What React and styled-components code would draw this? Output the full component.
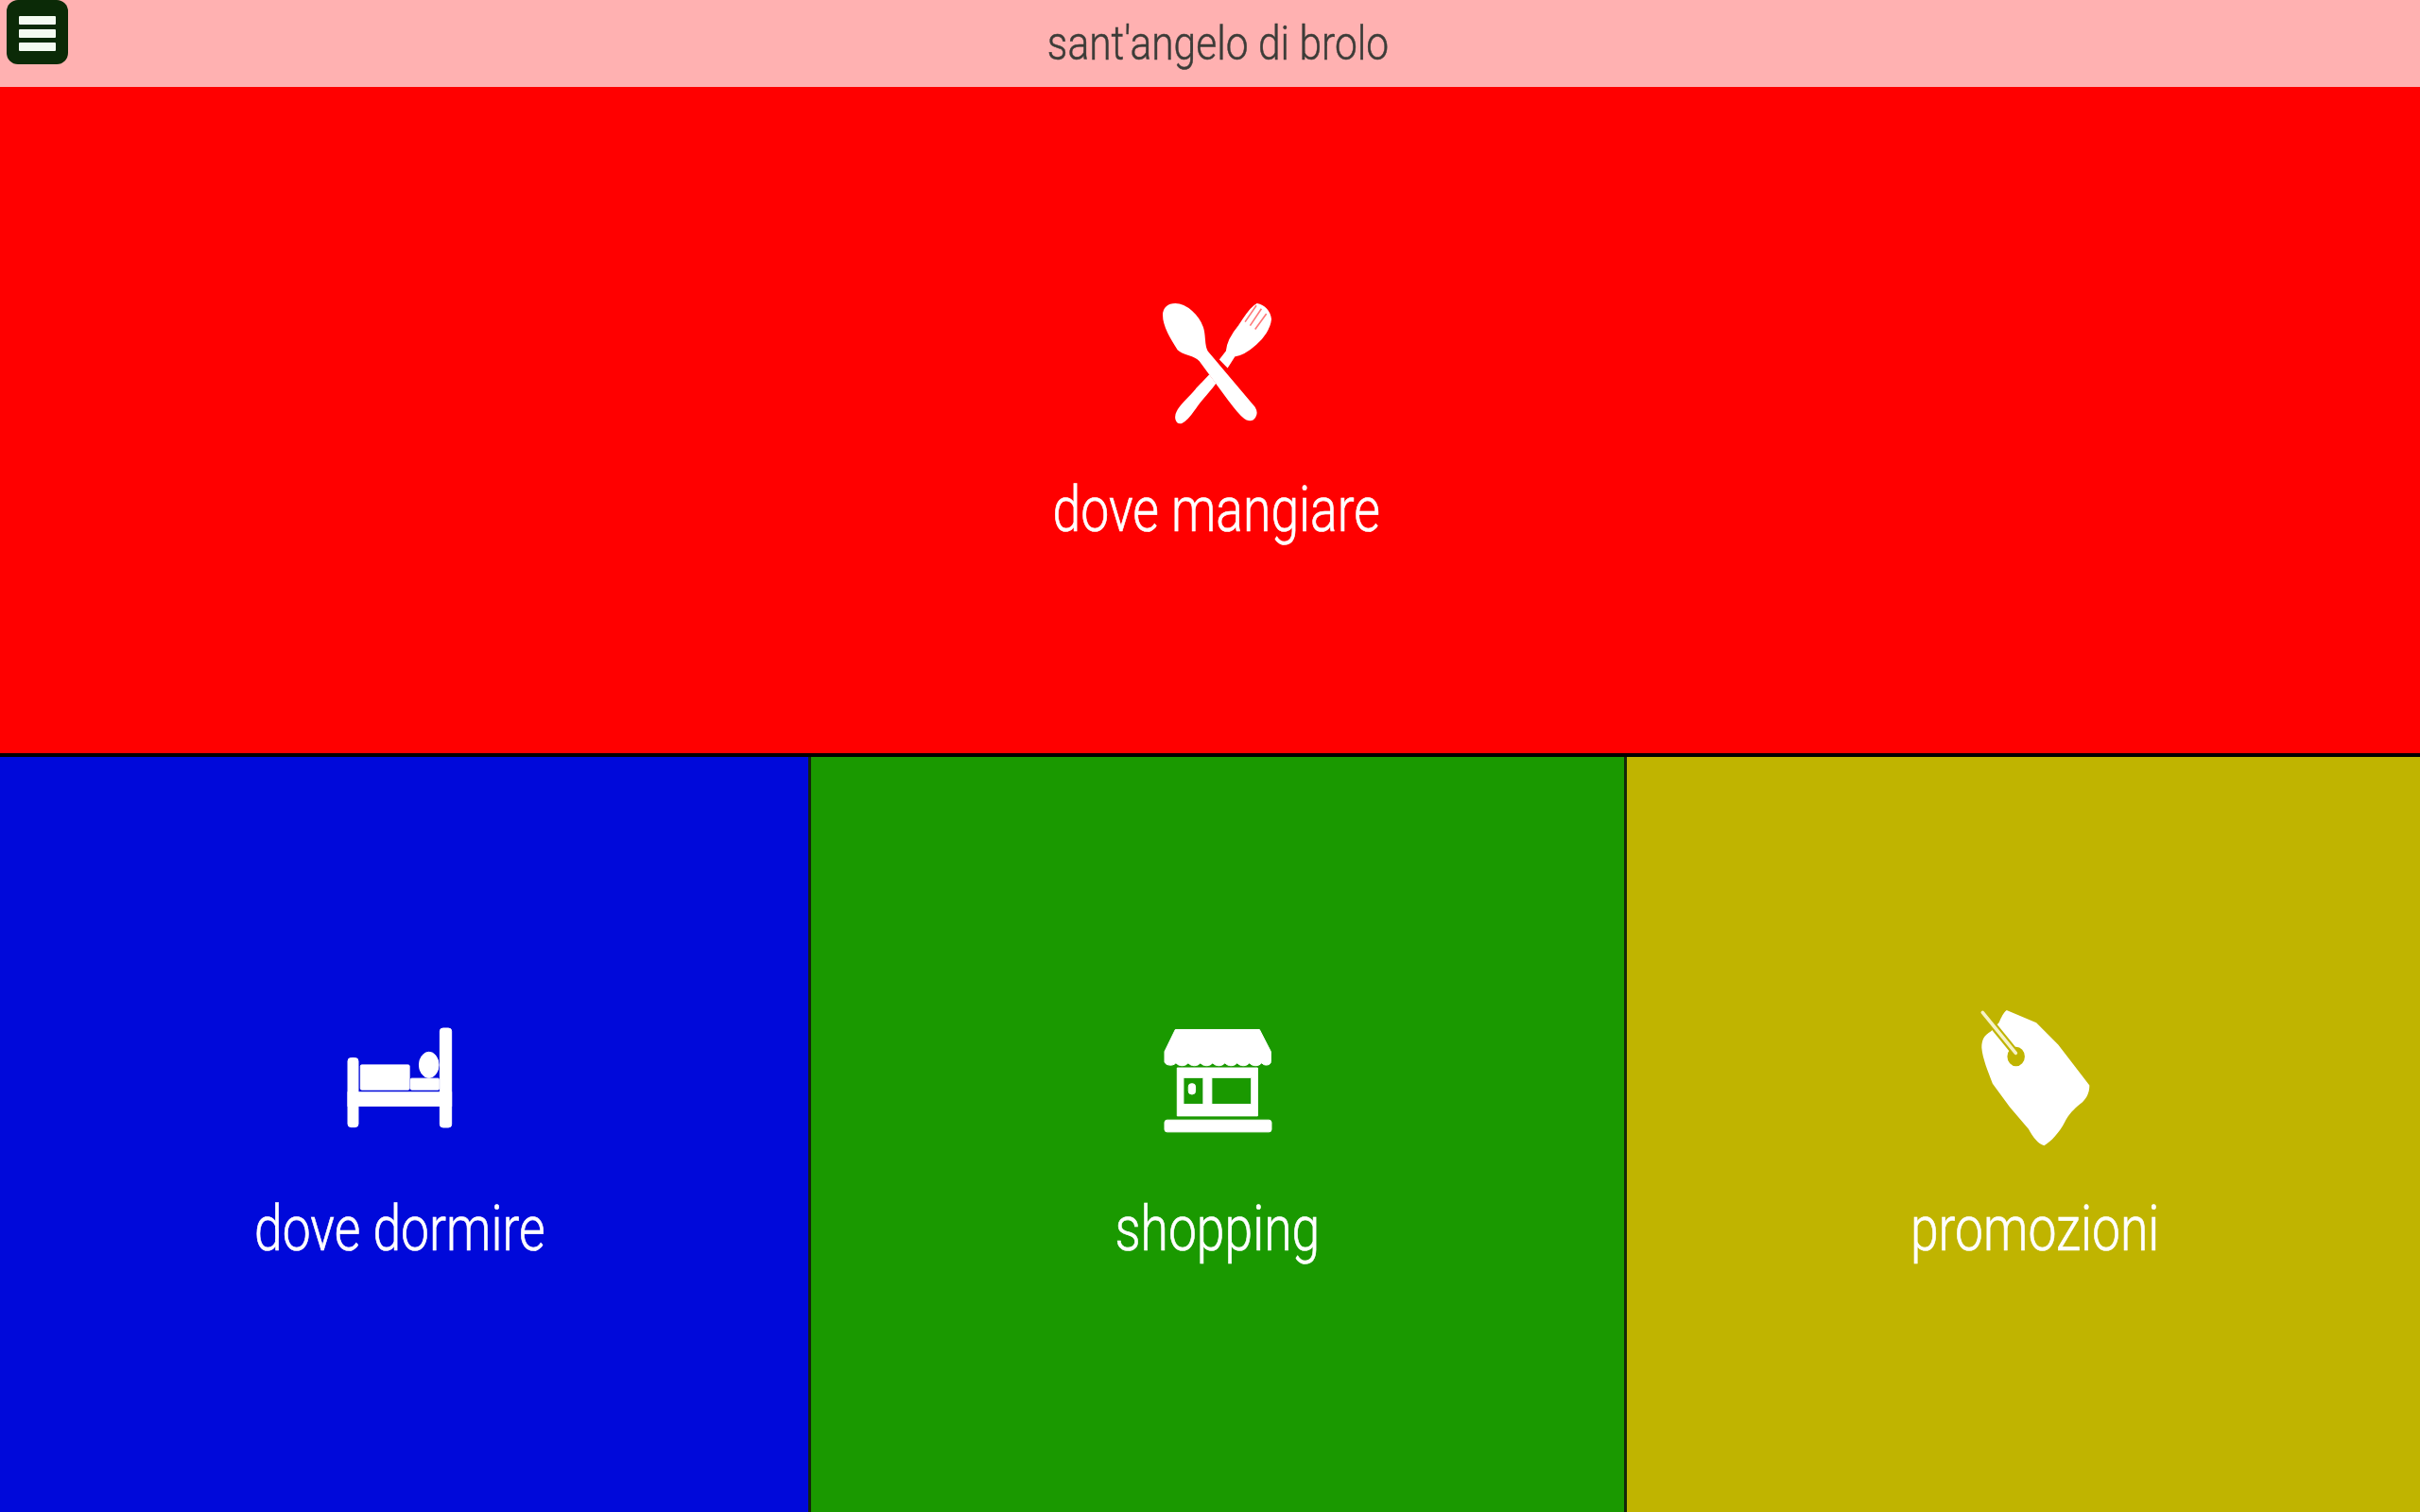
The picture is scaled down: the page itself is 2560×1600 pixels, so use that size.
import React from 'react';
import styled, { createGlobalStyle } from 'styled-components';

const GlobalStyle = createGlobalStyle`
  html, body {
    margin: 0;
    padding: 0;
    background: #000;
  }
  * {
    box-sizing: border-box;
  }
`;

const Page = styled.div`
  display: flex;
  flex-direction: column;
  height: 100vh;
  overflow: hidden;
  font-family: Roboto, 'Noto Sans', sans-serif;
  font-weight: 300;
`;

const Header = styled.header`
  position: relative;
  flex: 0 0 92px;
  display: flex;
  align-items: center;
  justify-content: center;
  padding-left: 16px;
  background: #ffb1b1;
`;

const MenuButton = styled.button`
  position: absolute;
  top: 0;
  left: 7px;
  width: 65px;
  height: 68px;
  padding: 17px 13px 0;
  display: flex;
  flex-direction: column;
  gap: 5px;
  border: 0;
  border-radius: 12px;
  background: #0b2a07;
`;

const MenuBar = styled.span`
  display: block;
  height: 9px;
  border-radius: 1px;
  background: #f4fbf2;
`;

const Title = styled.h1`
  margin: 0;
  font-size: 50px;
  font-weight: 300;
  color: #3c3c38;
  -webkit-text-stroke: 0.5px #3c3c38;
  transform: scaleX(0.85);
  filter: blur(0.6px);
`;

const Feature = styled.section`
  flex: 0 0 709px;
  border-bottom: 4px solid #000;
`;

const Row = styled.div`
  flex: 1;
  display: grid;
  grid-template-columns: 855px 863px 1fr;
`;

/* the labels sit a little off the middle of their tiles, so $shift moves the content */
const Tile = styled.a`
  height: 100%;
  display: flex;
  flex-direction: column;
  align-items: center;
  justify-content: center;
  padding-top: ${(p) => p.$top || 0}px;
  padding-left: ${(p) => Math.max(p.$shift || 0, 0) * 2}px;
  padding-right: ${(p) => Math.max(-(p.$shift || 0), 0) * 2}px;
  background: ${(p) => p.$bg};
  border-left: ${(p) => (p.$divider ? '3px solid #14260a' : '0')};
  color: #fff;
`;

const IconBox = styled.div`
  height: 150px;
  display: flex;
  align-items: center;
  justify-content: center;
  filter: blur(0.7px);

  svg {
    overflow: visible;
  }
`;

const Label = styled.span`
  margin-top: ${(p) => p.$gap}px;
  font-size: 66px;
  line-height: 80px;
  -webkit-text-stroke: 0.7px #fff;
  transform: scaleX(0.81);
  filter: blur(0.6px);
`;

const ForkSpoonIcon = () => (
  <svg width="113" height="127" viewBox="395 60 340 380" fill="#fff" stroke="#fff" strokeWidth="6">
    <path d="M432 62C468 62 505 100 518 135C528 165 520 192 533 213L684 392C696 412 682 436 660 428C640 418 628 398 604 368L510 240C490 220 462 224 442 206C420 172 395 132 395 96C395 75 410 62 432 62Z" />
    <path d="M692 62C714 66 732 84 735 110C732 138 712 168 688 188C668 206 645 222 620 226L598 260L576 238L596 212C598 184 616 154 636 130C652 108 668 74 692 62Z" />
    <path d="M540 290L558 314C540 340 515 362 498 388C484 408 470 432 452 438C434 442 430 420 440 402C452 378 482 356 500 332Z" />
    <path d="M690 66L654 118M706 76L670 130M722 92L686 142" stroke="#ff7a7a" strokeWidth="5" fill="none" />
  </svg>
);

const BedIcon = () => (
  <svg width="111" height="105" viewBox="350 80 332 316" fill="#fff" stroke="#fff" strokeWidth="3">
    <rect x="352" y="175" width="33" height="220" rx="10" />
    <rect x="645" y="80" width="37" height="316" rx="10" />
    <rect x="352" y="284" width="330" height="44" />
    <rect x="392" y="197" width="156" height="79" rx="4" />
    <rect x="552" y="240" width="90" height="36" rx="3" />
    <ellipse cx="610" cy="197" rx="31" ry="41" />
  </svg>
);

const StoreIcon = () => (
  <svg width="113" height="116" viewBox="332 68 340 348" fill="#fff" stroke="#fff" strokeWidth="3">
    <path d="M366 90H634L670 160V193C670 203 650 208 641 196C632 208 611 208 602 196C593 208 572 208 563 196C554 208 533 208 524 196C515 208 494 208 485 196C476 208 455 208 446 196C437 208 416 208 407 196C398 208 377 208 368 196C359 208 334 204 332 193V160Z" />
    <path
      fillRule="evenodd"
      d="M372 212H628V365H372ZM392 243V328H455V243ZM482 243V328H608V243Z"
    />
    <rect x="408" y="262" width="22" height="34" rx="10" />
    <rect x="332" y="378" width="340" height="38" rx="8" />
  </svg>
);

const TagIcon = () => (
  <svg width="117" height="147" viewBox="308 50 354 442">
    <path
      fill="#fff"
      fillRule="evenodd"
      d="M395 55L490 95L560 165L660 295C660 320 650 340 630 355C610 372 595 385 580 415C565 445 535 478 515 488C495 482 480 462 465 435L405 365L350 290C335 250 318 210 315 175C315 150 322 135 345 122L370 95C378 78 385 62 395 55ZM425 172A28 31 0 1 0 425 234A28 31 0 1 0 425 172Z"
    />
    <path d="M318 62L424 192" stroke="#c0b400" strokeWidth="24" fill="none" />
    <path d="M318 62L424 192" stroke="#f6f3c8" strokeWidth="11" strokeLinecap="round" fill="none" />
  </svg>
);

const tiles = [
  { label: 'dove dormire', bg: '#0009da', icon: <BedIcon />, shift: -5 },
  { label: 'shopping', bg: '#1a9900', icon: <StoreIcon />, divider: true, shift: 0 },
  { label: 'promozioni', bg: '#c0b400', icon: <TagIcon />, divider: true, shift: 12 },
];

const App = () => (
  <Page>
    <GlobalStyle />
    <Header>
      <MenuButton aria-label="menu">
        <MenuBar />
        <MenuBar />
        <MenuBar />
      </MenuButton>
      <Title>sant'angelo di brolo</Title>
    </Header>
    <Feature>
      <Tile $bg="#ff0000" $shift={7}>
        <IconBox>
          <ForkSpoonIcon />
        </IconBox>
        <Label $gap={40}>dove mangiare</Label>
      </Tile>
    </Feature>
    <Row>
      {tiles.map((tile) => (
        <Tile key={tile.label} $bg={tile.bg} $divider={tile.divider} $shift={tile.shift} $top={5}>
          <IconBox>{tile.icon}</IconBox>
          <Label $gap={46}>{tile.label}</Label>
        </Tile>
      ))}
    </Row>
  </Page>
);

export default App;
